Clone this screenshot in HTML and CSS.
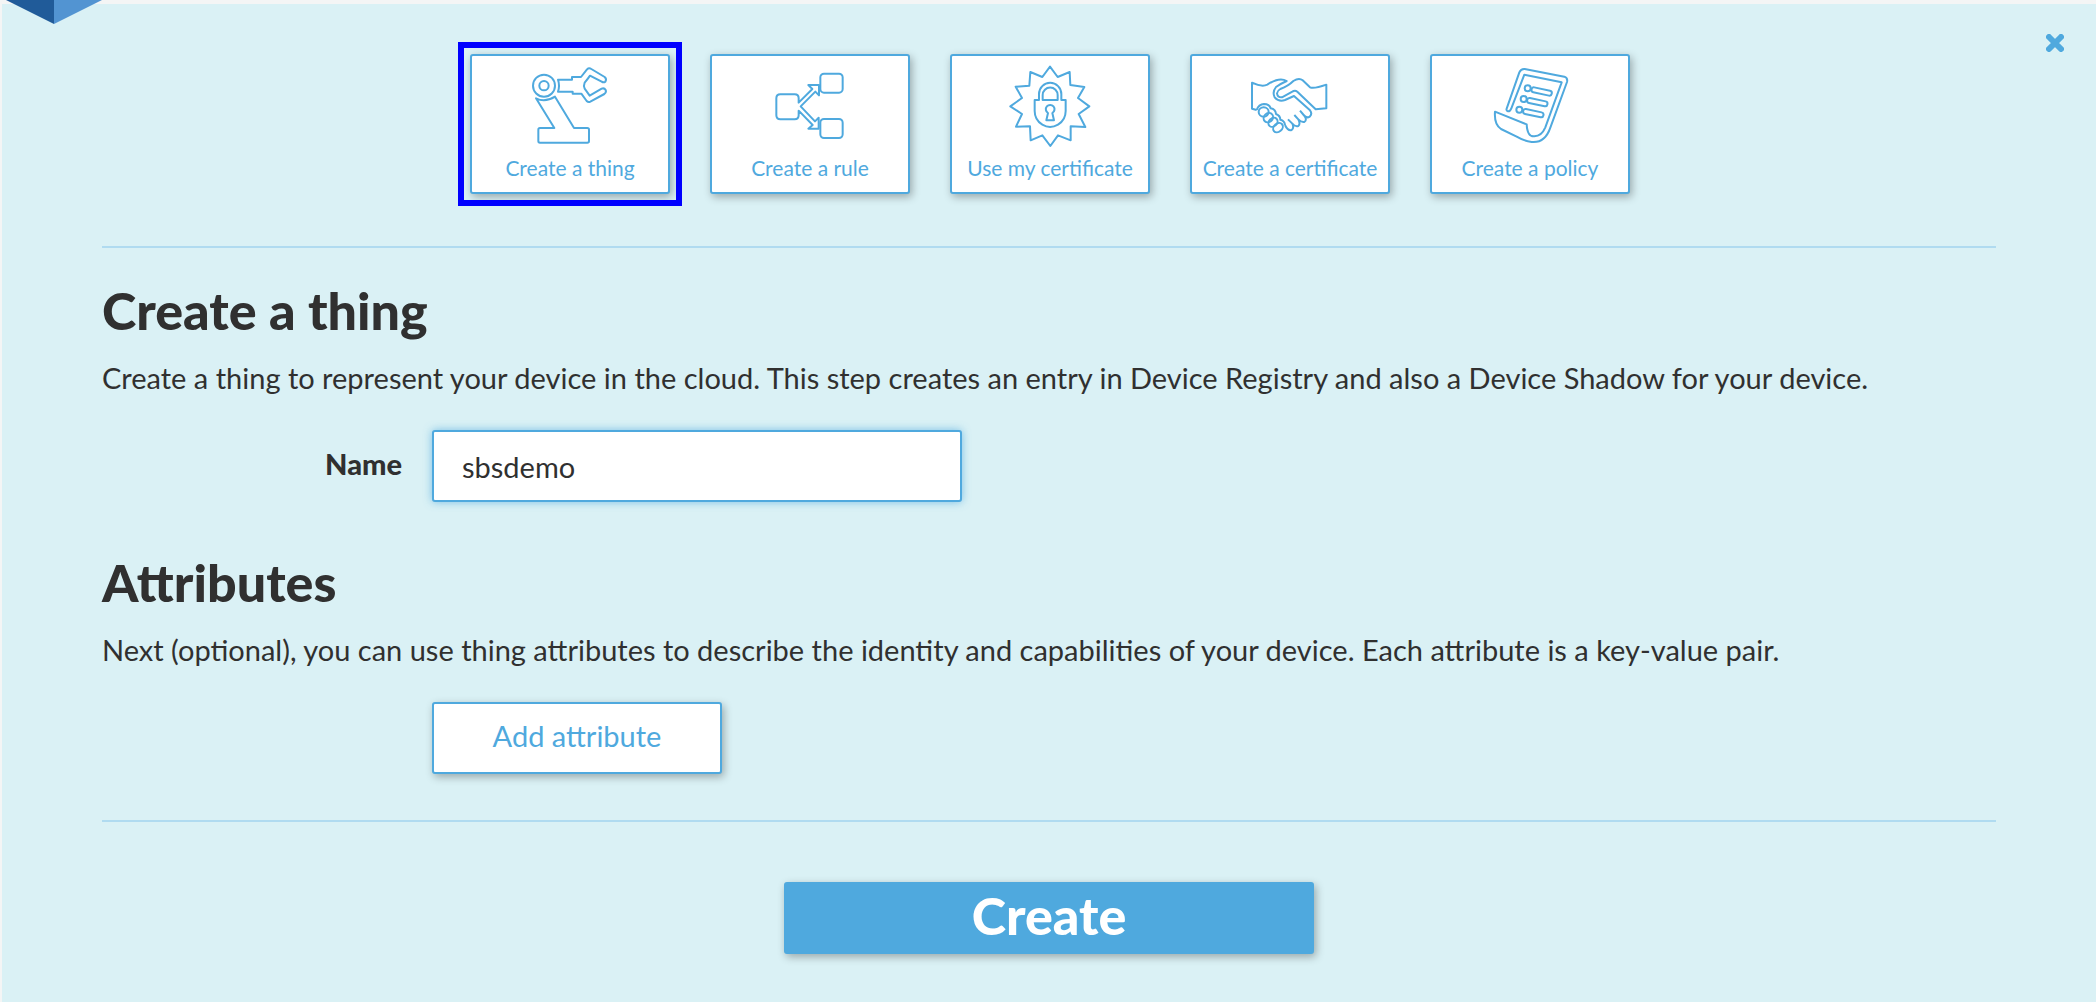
FILE: index.html
```html
<!DOCTYPE html>
<html lang="en">
<head>
<meta charset="utf-8">
<title>Create a thing</title>
<meta name="viewport" content="width=device-width, initial-scale=1">
<link rel="stylesheet" href="styles.css">
</head>
<body>
<main class="panel">
  <svg class="logo" viewBox="0 0 96 24" aria-hidden="true">
    <path fill="#205b99" d="M0 0H48V24Z"/>
    <path fill="#5294d2" d="M48 0H96L48 24Z"/>
  </svg>
  <button class="close" type="button" aria-label="Close">
    <svg viewBox="0 0 18 18" aria-hidden="true"><path d="M3 3L15 15M15 3L3 15"/></svg>
  </button>

  <nav class="cards" aria-label="Resources">
    <button class="card selected" type="button">
      <svg class="icon" viewBox="210 102 300 252" aria-hidden="true">
        <circle cx="282" cy="167" r="33"/><circle cx="282" cy="167" r="14"/>
        <path d="M324 149H366V141H393L411 118Q417 112 424 117L464 141Q471 147 466 155Q461 159 455 155L420 137Q414 146 404 158Q400 167 404 176L419 197L455 176Q463 173 467 180Q470 187 463 192L421 215Q415 218 410 213L394 191H368V185H324Q330 167 324 149Z"/>
        <path d="M258 205Q285 219 315 200L372 294H412Q417 294 417 299V333Q417 338 412 338H270Q265 338 265 333V299Q265 294 270 294H313Z"/>
      </svg>
      <span>Create a thing</span>
    </button>
    <button class="card" type="button">
      <svg class="icon" viewBox="180 72 300 252" aria-hidden="true">
        <path d="M296 188V175Q296 163 284 163H241Q229 163 229 175V226Q229 238 241 238H284Q296 238 296 226V212L338 255L325 266H356V233L345 244L302 199L346 155L357 166V135H325L337 147Z"/>
        <rect x="361" y="101" width="67" height="57" rx="11"/><rect x="361" y="237" width="67" height="57" rx="11"/>
      </svg>
      <span>Create a rule</span>
    </button>
    <button class="card" type="button">
      <svg class="icon" viewBox="180 72 300 252" aria-hidden="true">
        <path d="M330 80L353 111L389 96L391 135L433 141L414 174L448 199L416 222L436 261L392 259L392 301L354 286L331 318L307 286L272 301L270 259L228 260L246 222L211 199L246 174L227 140L268 137L271 96L307 111Z"/>
        <path d="M284 180H297V162A33 33 0 0 1 364 162V180H377V213Q377 240 354 254Q330 268 307 254Q284 240 284 213Z"/>
        <path d="M308 180V165A22 22 0 0 1 353 165V180Z"/>
        <path d="M324 219A13 13 0 1 1 337 219L342 241H319Z"/>
      </svg>
      <span>Use my certificate</span>
    </button>
    <button class="card" type="button">
      <svg class="icon" viewBox="180 72 300 252" aria-hidden="true">
        <path d="M230 210L216 206V128Q245 142 262 134Q298 110 320 123Q300 132 288 141Q276 156 284 172Q297 187 315 180L342 168L390 211Q398 222 389 230Q380 236 371 225L360 212M371 225Q383 240 373 246Q364 248 355 238L343 225M355 238Q362 252 355 258Q345 261 337 251L324 238M337 251Q343 264 335 270Q323 273 315 255"/>
        <path d="M439 134V205L407 208L352 155Q345 149 337 155L306 172Q293 173 291 160Q292 152 301 147Q325 138 340 123Q357 112 368 121L390 142Q402 147 439 134Z"/>
        <path d="M230 210Q236 193 252 192Q268 192 272 205Q287 208 288 222Q301 227 301 239Q314 242 315 255"/>
        <ellipse cx="251" cy="216" rx="15" ry="14"/><ellipse cx="265" cy="233" rx="15" ry="13" transform="rotate(-45 265 233)"/><ellipse cx="279" cy="247" rx="15" ry="12" transform="rotate(-45 279 247)"/><ellipse cx="294" cy="263" rx="16" ry="12" transform="rotate(-40 294 263)"/>
      </svg>
      <span>Create a certificate</span>
    </button>
    <button class="card" type="button">
      <svg class="icon" viewBox="180 72 300 252" aria-hidden="true">
        <path d="M260 206L298 97Q303 86 314 87L433 110Q444 114 441 126L391 263Q375 310 335 306Q310 302 290 290L243 267Q222 253 225 215L320 253Q322 291 343 289Q365 288 376 262L425 127L313 104L274 205Q270 215 264 214Q258 212 260 206Z"/>
        <circle cx="323" cy="145" r="9"/><circle cx="311" cy="177" r="9"/><circle cx="298" cy="209" r="9"/>
        <rect x="334" y="147" width="62" height="15" rx="7" transform="rotate(12 365 154)"/>
        <rect x="321" y="179" width="62" height="15" rx="7" transform="rotate(12 352 186)"/>
        <rect x="309" y="212" width="62" height="15" rx="7" transform="rotate(12 340 219)"/>
      </svg>
      <span>Create a policy</span>
    </button>
  </nav>

  <form class="form">
    <section class="section">
      <h1>Create a thing</h1>
      <p>Create a thing to represent your device in the cloud. This step creates an entry in Device Registry and also a Device Shadow for your device.</p>
      <div class="row">
        <label for="name">Name</label>
        <input id="name" type="text" value="sbsdemo">
      </div>
    </section>
    <section class="section">
      <h2>Attributes</h2>
      <p>Next (optional), you can use thing attributes to describe the identity and capabilities of your device. Each attribute is a key-value pair.</p>
      <div class="row">
        <button class="add" type="button">Add attribute</button>
      </div>
    </section>
    <footer class="actions">
      <button class="create" type="button">Create</button>
    </footer>
  </form>
</main>
</body>
</html>
```
FILE: styles.css
```css
* { box-sizing: border-box; }

body {
  margin: 0;
  padding: 4px 0 0 2px;
  background: #f4f5f5;
  color: #303030;
  font-family: Lato, "Noto Sans", sans-serif;
  font-size: 29px;
  line-height: 40px;
}

button, input { font: inherit; cursor: pointer; }

.panel {
  position: relative;
  min-height: calc(100vh - 4px);
  padding: 50px 100px 48px;
  background: #daf1f5;
}

.logo {
  position: absolute;
  top: -4px;
  left: 4px;
  width: 96px;
  height: 24px;
}

.close {
  position: absolute;
  top: 30px;
  right: 32px;
  width: 18px;
  height: 18px;
  padding: 0;
  border: 0;
  background: none;
}

.close svg {
  display: block;
  stroke: #4fa9de;
  stroke-width: 6;
  stroke-linecap: round;
}

.cards {
  display: flex;
  flex-wrap: wrap;
  justify-content: center;
  gap: 40px;
  padding: 0 0 52px 2px;
  border-bottom: 2px solid #b0dbf0;
}

.card {
  position: relative;
  display: flex;
  flex-direction: column;
  align-items: center;
  width: 200px;
  height: 140px;
  padding: 8px 0 0;
  border: 2px solid #4fa9de;
  border-radius: 3px;
  background: #fff;
  color: #4fa9de;
  box-shadow: 2px 3px 8px rgba(0, 0, 0, 0.3);
  font-size: 21px;
  line-height: 24px;
  white-space: nowrap;
}

.card span { margin-top: 8px; }

/* Square ring round the chosen card */
.selected::after {
  content: "";
  position: absolute;
  inset: -14px;
  border: 6px solid #00f;
}

.icon {
  width: 100px;
  height: 84px;
  fill: none;
  stroke: #4fa9de;
  stroke-width: 6;
  stroke-linejoin: round;
}

h1, h2 {
  margin: 0;
  font-size: 52px;
  line-height: 64px;
  font-weight: 900;
}

p { margin: 16px 0 32px; }

.section { padding-top: 30px; }

.section + .section { padding-top: 48px; }

.row {
  display: flex;
  align-items: center;
  padding-left: 330px;
}

label {
  width: 300px;
  margin: 0 30px 0 -330px;
  padding-bottom: 4px;
  text-align: right;
  font-weight: 900;
}

input {
  width: 530px;
  height: 72px;
  padding: 0 28px;
  border: 2px solid #4fa9de;
  border-radius: 3px;
  background: #fff;
  color: #303030;
  box-shadow: 0 0 8px rgba(79, 169, 222, 0.7);
  cursor: text;
}

.add {
  width: 290px;
  height: 72px;
  padding: 0 0 4px;
  border: 2px solid #4fa9de;
  border-radius: 3px;
  background: #fff;
  color: #4fa9de;
  box-shadow: 2px 3px 8px rgba(0, 0, 0, 0.3);
}

.actions {
  display: flex;
  justify-content: center;
  margin-top: 46px;
  padding-top: 60px;
  border-top: 2px solid #b0dbf0;
}

.create {
  width: 530px;
  height: 72px;
  padding: 0 0 6px;
  border: 0;
  border-radius: 3px;
  background: #4fa9de;
  color: #fff;
  box-shadow: 2px 3px 8px rgba(0, 0, 0, 0.3);
  font-size: 52px;
  font-weight: 900;
  line-height: 64px;
}
```
